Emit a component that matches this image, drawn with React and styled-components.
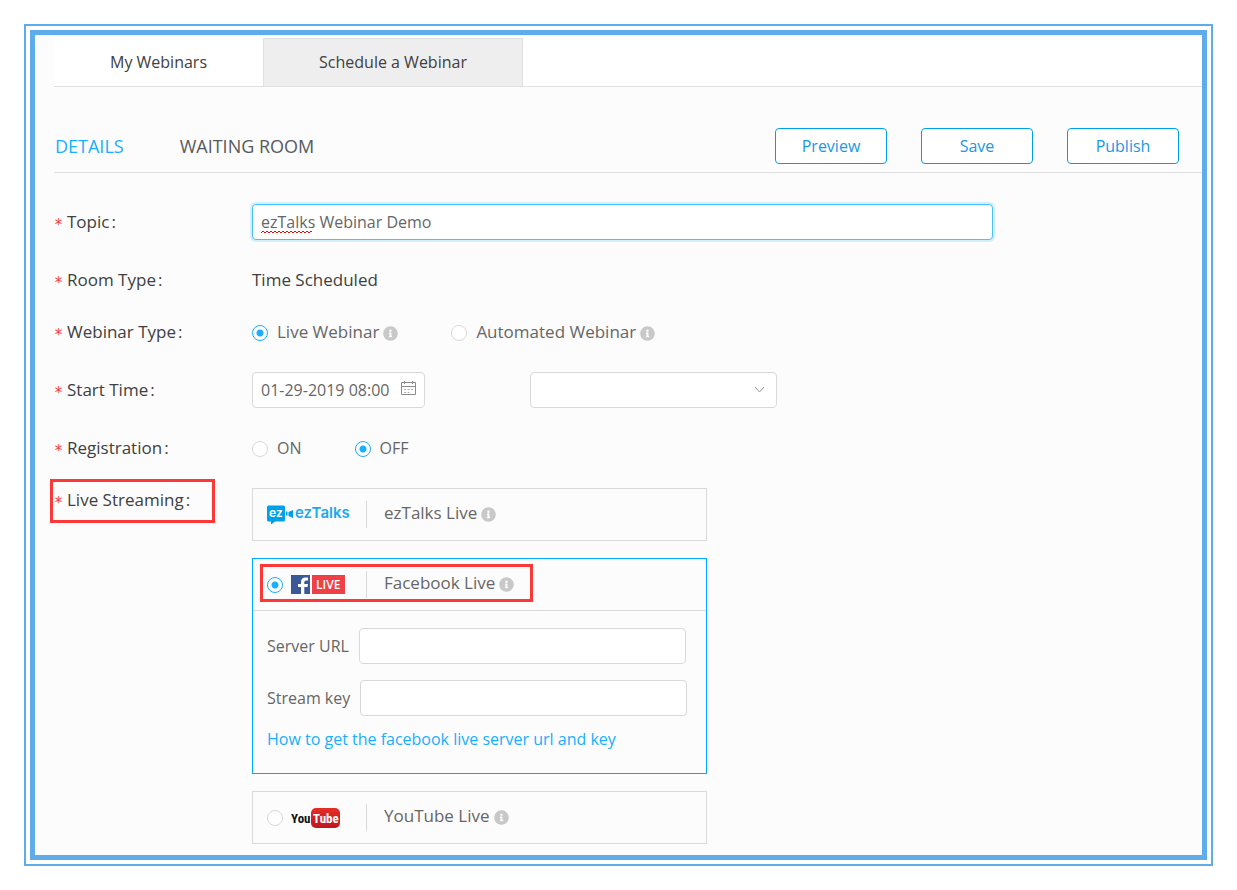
import { useState } from "react";
import styled, { createGlobalStyle } from "styled-components";
import { FaInfoCircle } from "react-icons/fa";

const GlobalStyle = createGlobalStyle`
  * {
    box-sizing: border-box;
  }

  body {
    margin: 0;
    background-color: #fff;
    color: #404040;
    font-family: "Open Sans", "Noto Sans", sans-serif;
    font-size: 16px;
    line-height: 24px;
  }

  input, select, button {
    font: inherit;
  }
`;

const Frame = styled.div`
  margin: 24px;
  padding: 4px;
  border: 2px solid #5eace9;
`;

const Page = styled.main`
  border: 5px solid #5eace9;
  background-color: #fcfcfc;
  padding: 3px 0 11px 19px;
`;

const TopTabs = styled.nav`
  display: flex;
  height: 49px;
  background-color: #fff;
  border-bottom: 1px solid #e0e0e0;
`;

const TopTab = styled.a`
  display: flex;
  align-items: center;
  justify-content: center;
  width: ${(props) => (props.$active ? "260px" : "209px")};
  padding-bottom: 1px;
  border: ${(props) => (props.$active ? "1px solid #e0e0e0" : "none")};
  border-bottom: none;
  background-color: ${(props) => (props.$active ? "#eee" : "#fff")};
  color: #404040;
  text-decoration: none;
`;

const SubHeader = styled.header`
  display: flex;
  align-items: center;
  justify-content: space-between;
  padding: 41px 23px 8px 1px;
  border-bottom: 1px solid #e0e0e0;
`;

const SubTabs = styled.nav`
  display: flex;
  gap: 56px;
`;

const SubTab = styled.a`
  font-size: 18px;
  color: ${(props) => (props.$active ? "#1aaeff" : "#595959")};
  text-decoration: none;
`;

const Actions = styled.div`
  display: flex;
  gap: 34px;
`;

const Button = styled.button`
  width: 112px;
  height: 36px;
  padding: 0;
  border: 1px solid #00a0e9;
  border-radius: 4px;
  background-color: #fff;
  color: #1a97e6;
  cursor: pointer;
`;

const Form = styled.form`
  display: flex;
  flex-direction: column;
  gap: 28px;
  padding-top: 31px;
`;

const Row = styled.div`
  display: grid;
  grid-template-columns: 198px 1fr;
  align-items: ${(props) => (props.$top ? "start" : "center")};
`;

const FieldLabel = styled.label`
  position: relative;
  display: flex;
  align-items: center;
  gap: 4px;
  font-size: 17px;
`;

const Star = styled.span`
  width: 9px;
  height: 18px;
  color: #f04134;
  font-family: "DejaVu Sans Mono", monospace;
  font-size: 15px;
  line-height: 24px;
`;

const Colon = styled.span`
  margin-left: 2px;
`;

const Highlight = styled.span`
  position: absolute;
  inset: ${(props) => props.$inset};
  border: 3px solid #fc3838;
  pointer-events: none;
`;

const PlainValue = styled.span`
  font-size: 17px;
`;

const InputWrap = styled.div`
  position: relative;
  width: ${(props) => props.$width};
`;

const Input = styled.input`
  display: block;
  width: 100%;
  height: 36px;
  padding: 0 8px;
  border: 1px solid ${(props) => (props.$focused ? "#48c0ff" : "#d9d9d9")};
  border-radius: 4px;
  outline: none;
  background-color: #fff;
  box-shadow: ${(props) => (props.$focused ? "0 0 0 2px #d1effd" : "none")};
  color: #666;
`;

const Squiggle = styled.svg`
  position: absolute;
  left: 9px;
  top: 26px;
`;

const InputIcon = styled.svg`
  position: absolute;
  right: ${(props) => props.$right};
  top: ${(props) => props.$offset};
  pointer-events: none;
`;

const Select = styled.select`
  display: block;
  width: 100%;
  height: 36px;
  padding: 0 8px;
  border: 1px solid #d9d9d9;
  border-radius: 4px;
  appearance: none;
  background-color: #fff;
  color: #666;
`;

const Fields = styled.div`
  display: flex;
  gap: ${(props) => props.$gap};
`;

const RadioLabel = styled.label`
  display: flex;
  align-items: center;
  gap: 9px;
  color: #666;
  font-size: ${(props) => (props.$small ? "16px" : "17px")};
`;

const Radio = styled.input`
  flex: none;
  width: 16px;
  height: 16px;
  margin: 2px 0 0;
  border: 1px solid #d9d9d9;
  border-radius: 50%;
  appearance: none;
  background-color: #fff;

  &:checked {
    border-color: #1aaeff;
    background-image: radial-gradient(circle, #1aaeff 3px, transparent 4px);
  }
`;

const WithInfo = styled.span`
  display: flex;
  align-items: center;
  gap: 4px;

  svg {
    margin-top: 2px;
    color: #c8c8c8;
    font-size: 15px;
  }
`;

const Cards = styled.div`
  display: flex;
  flex-direction: column;
  gap: 17px;
  width: 455px;
`;

const Card = styled.section`
  border: 1px solid ${(props) => (props.$active ? "#00aaff" : "#d9d9d9")};
`;

const CardHeader = styled.label`
  position: relative;
  display: flex;
  align-items: center;
  height: 51px;
  padding-left: 14px;
  color: #666;
  font-size: 17px;
`;

const CardLogo = styled.span`
  display: flex;
  align-items: center;
  gap: 8px;
  width: 99px;

  input {
    margin: 0;
  }
`;

const CardTitle = styled.span`
  display: flex;
  align-items: center;
  height: 27px;
  padding: 0 0 3px 17px;
  border-left: 1px solid #d9d9d9;
`;

const CardBody = styled.div`
  display: flex;
  flex-direction: column;
  padding: 17px 19px 22px 14px;
  border-top: 1px solid #d9d9d9;
`;

const CardField = styled.div`
  display: flex;
  align-items: center;
  gap: 10px;
  margin-bottom: ${(props) => props.$space};
  color: #666;

  label {
    flex: none;
  }
`;

const HelpLink = styled.a`
  align-self: flex-start;
  color: #1aaeff;
  text-decoration: none;
`;

function EzTalksLogo() {
  return (
    <svg width="84" height="22" viewBox="0 0 84 22" role="img" aria-label="ezTalks">
      <path d="M1.500 1.500h15q1.500 0 1.500 1.500v13q0 1.500-1.500 1.500H8l-4 3v-3H1.500Q0 17.500 0 16V3q0-1.500 1.500-1.500z" fill="#00a0e9" />
      <path d="M19 7.500h1.500v4H19zM21.500 8L26 6v8l-4.500-2z" fill="#00a0e9" />
      <text x="2" y="13" fontFamily="Inter, sans-serif" fontSize="12" fontWeight="600" fill="#fff">ez</text>
      <text x="28" y="14" fontFamily="Inter, sans-serif" fontSize="15" fontWeight="600" fill="#1ca9ec">ezTalks</text>
    </svg>
  );
}

function FacebookLogo() {
  return (
    <svg width="54" height="19" viewBox="0 0 54 19" role="img" aria-label="Facebook Live">
      <rect width="19" height="19" fill="#3b5998" />
      <path d="M10 19v-7H7V9h3V7q0-4.500 4.500-4.500H17v3h-2q-1.700 0-1.700 1.700V9H17l-.5 3h-3.200v7z" fill="#fff" />
      <rect x="21" width="33" height="19" fill="#ee4145" />
      <text x="25" y="14" fontFamily="Open Sans, sans-serif" fontSize="12" fontWeight="600" fill="#fff">LIVE</text>
    </svg>
  );
}

function YouTubeLogo() {
  return (
    <svg width="50" height="20" viewBox="0 0 50 20" role="img" aria-label="YouTube">
      <defs>
        <linearGradient id="tube" x1="0" y1="0" x2="0" y2="1">
          <stop offset="0" stopColor="#e52d27" />
          <stop offset="1" stopColor="#bf171d" />
        </linearGradient>
      </defs>
      <rect x="20" width="29" height="20" rx="5" fill="url(#tube)" />
      <text x="0" y="15" fontFamily="Roboto Condensed, Roboto, sans-serif" fontSize="13" fontWeight="700" fill="#111">You</text>
      <text x="22" y="15" fontFamily="Roboto Condensed, Roboto, sans-serif" fontSize="13" fontWeight="700" fill="#fff">Tube</text>
    </svg>
  );
}

function RequiredLabel({ children, htmlFor, id, highlighted }) {
  return (
    <FieldLabel as={htmlFor ? "label" : "div"} htmlFor={htmlFor} id={id}>
      <Star>*</Star>
      <span>{children}<Colon>:</Colon></span>
      {highlighted && <Highlight $inset="-9px 37px -11px -4px" />}
    </FieldLabel>
  );
}

function App() {

  const [topic, setTopic] = useState("ezTalks Webinar Demo");
  const [startTime, setStartTime] = useState("01-29-2019 08:00");
  const [webinarType, setWebinarType] = useState("live");
  const [registration, setRegistration] = useState("off");
  const [platform, setPlatform] = useState("facebook");

  return (
    <>
      <GlobalStyle />
      <Frame>
        <Page>
          <TopTabs>
            <TopTab href="#webinars">My Webinars</TopTab>
            <TopTab href="#schedule" $active>Schedule a Webinar</TopTab>
          </TopTabs>

          <SubHeader>
            <SubTabs>
              <SubTab href="#details" $active>DETAILS</SubTab>
              <SubTab href="#waiting">WAITING ROOM</SubTab>
            </SubTabs>
            <Actions>
              <Button type="button">Preview</Button>
              <Button type="button">Save</Button>
              <Button type="button">Publish</Button>
            </Actions>
          </SubHeader>

          <Form onSubmit={(e) => e.preventDefault()}>
            <Row>
              <RequiredLabel htmlFor="topic">Topic</RequiredLabel>
              <InputWrap $width="741px">
                <Input id="topic" type="text" $focused value={topic} onChange={(e) => setTopic(e.target.value)} />
                <Squiggle width="53" height="4" viewBox="0 0 53 4" aria-hidden="true">
                  <path
                    d="M0 3l2-2 2 2 2-2 2 2 2-2 2 2 2-2 2 2 2-2 2 2 2-2 2 2 2-2 2 2 2-2 2 2 2-2 2 2 2-2 2 2 2-2 2 2 2-2 2 2 2-2 1 1"
                    fill="none"
                    stroke="#f00"
                  />
                </Squiggle>
              </InputWrap>
            </Row>

            <Row>
              <RequiredLabel>Room Type</RequiredLabel>
              <PlainValue>Time Scheduled</PlainValue>
            </Row>

            <Row>
              <RequiredLabel id="webinar-type">Webinar Type</RequiredLabel>
              <Fields $gap="53px" role="radiogroup" aria-labelledby="webinar-type">
                <RadioLabel>
                  <Radio type="radio" name="webinarType" checked={webinarType === "live"} onChange={() => setWebinarType("live")} />
                  <WithInfo>Live Webinar <FaInfoCircle /></WithInfo>
                </RadioLabel>
                <RadioLabel>
                  <Radio type="radio" name="webinarType" checked={webinarType === "automated"} onChange={() => setWebinarType("automated")} />
                  <WithInfo>Automated Webinar <FaInfoCircle /></WithInfo>
                </RadioLabel>
              </Fields>
            </Row>

            <Row>
              <RequiredLabel htmlFor="startTime">Start Time</RequiredLabel>
              <Fields $gap="105px">
                <InputWrap $width="173px">
                  <Input id="startTime" type="text" value={startTime} onChange={(e) => setStartTime(e.target.value)} />
                  <InputIcon $right="9px" $offset="9px" width="15" height="15" viewBox="0 0 15 15" fill="none" stroke="#8c8c8c" aria-hidden="true">
                    <path d="M.5 1.500h14v12H.5zM.5 5.500h14M3.500 0v3M11.500 0v3" />
                    <path d="M3 8.500h2M6.500 8.500h2M10 8.500h2M3 11.500h2M6.500 11.500h2" opacity="0.7" />
                  </InputIcon>
                </InputWrap>
                <InputWrap $width="247px">
                  <Select aria-label="Time zone" defaultValue="">
                    <option value=""></option>
                  </Select>
                  <InputIcon $right="12px" $offset="14px" width="11" height="8" viewBox="0 0 11 8" fill="none" stroke="#999" aria-hidden="true">
                    <path d="M1 1l4.500 5L10 1" />
                  </InputIcon>
                </InputWrap>
              </Fields>
            </Row>

            <Row>
              <RequiredLabel id="registration">Registration</RequiredLabel>
              <Fields $gap="53px" role="radiogroup" aria-labelledby="registration">
                <RadioLabel $small>
                  <Radio type="radio" name="registration" checked={registration === "on"} onChange={() => setRegistration("on")} />
                  ON
                </RadioLabel>
                <RadioLabel $small>
                  <Radio type="radio" name="registration" checked={registration === "off"} onChange={() => setRegistration("off")} />
                  OFF
                </RadioLabel>
              </Fields>
            </Row>

            <Row $top>
              <RequiredLabel highlighted>Live Streaming</RequiredLabel>
              <Cards>
                <Card>
                  <CardHeader as="div">
                    <CardLogo><EzTalksLogo /></CardLogo>
                    <CardTitle><WithInfo>ezTalks Live <FaInfoCircle /></WithInfo></CardTitle>
                  </CardHeader>
                </Card>

                <Card $active>
                  <CardHeader>
                    <CardLogo>
                      <Radio type="radio" name="platform" checked={platform === "facebook"} onChange={() => setPlatform("facebook")} />
                      <FacebookLogo />
                    </CardLogo>
                    <CardTitle><WithInfo>Facebook Live <FaInfoCircle /></WithInfo></CardTitle>
                    <Highlight $inset="5px 173px 8px 7px" />
                  </CardHeader>
                  <CardBody>
                    <CardField $space="16px">
                      <label htmlFor="serverUrl">Server URL</label>
                      <InputWrap $width="327px">
                        <Input id="serverUrl" type="text" />
                      </InputWrap>
                    </CardField>
                    <CardField $space="11px">
                      <label htmlFor="streamKey">Stream key</label>
                      <InputWrap $width="327px">
                        <Input id="streamKey" type="text" />
                      </InputWrap>
                    </CardField>
                    <HelpLink href="#help">How to get the facebook live server url and key</HelpLink>
                  </CardBody>
                </Card>

                <Card>
                  <CardHeader>
                    <CardLogo>
                      <Radio type="radio" name="platform" checked={platform === "youtube"} onChange={() => setPlatform("youtube")} />
                      <YouTubeLogo />
                    </CardLogo>
                    <CardTitle><WithInfo>YouTube Live <FaInfoCircle /></WithInfo></CardTitle>
                  </CardHeader>
                </Card>
              </Cards>
            </Row>
          </Form>
        </Page>
      </Frame>
    </>
  );
}

export default App;
